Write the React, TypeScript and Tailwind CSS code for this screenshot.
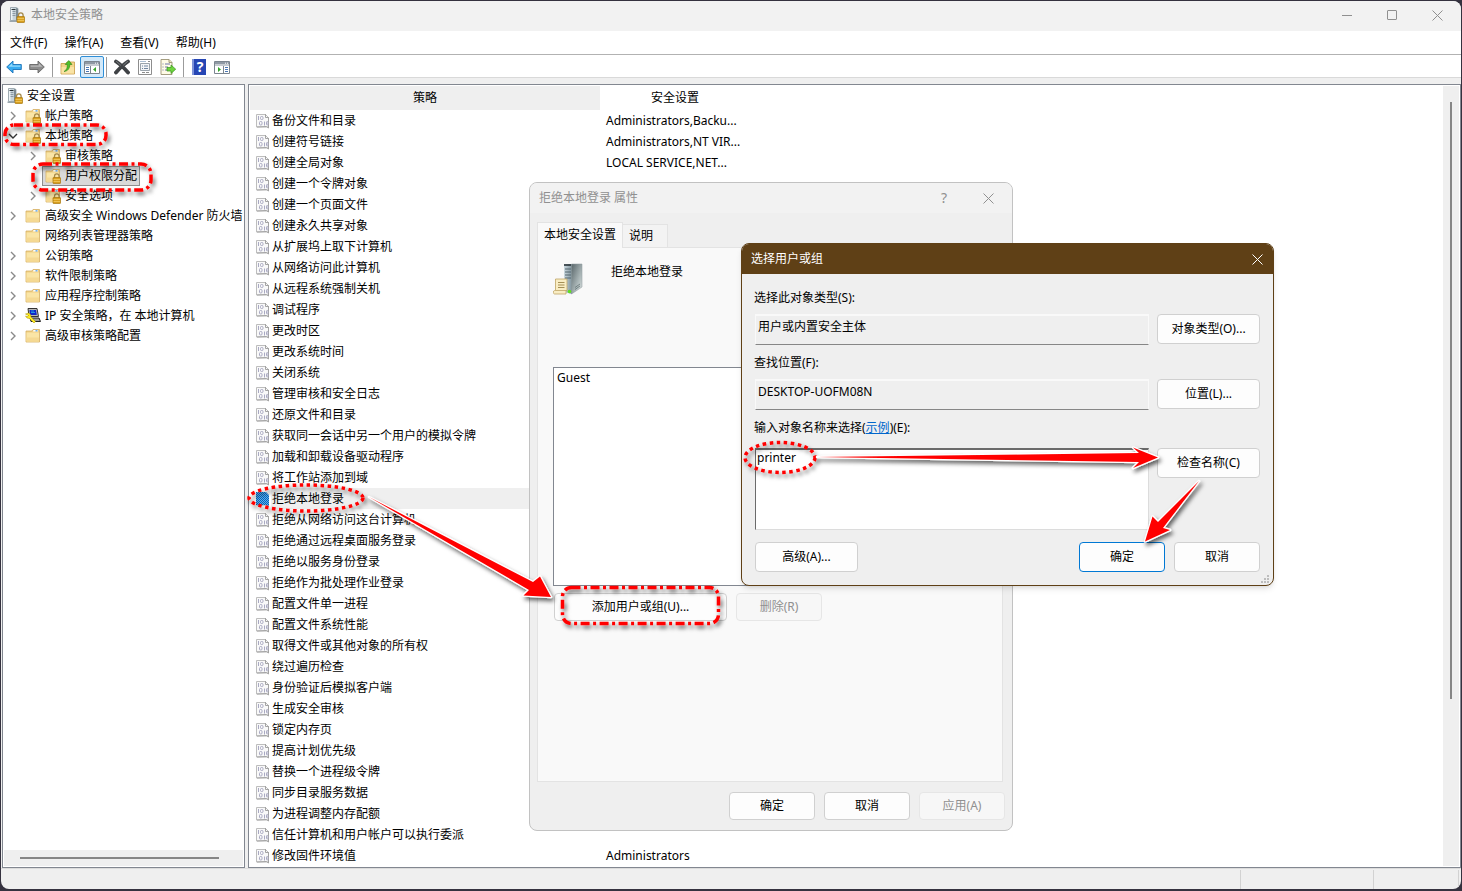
import React from 'react'

type IconKind = 'server' | 'folder' | 'folder-lock' | 'ip'

interface TreeItem {
  label: string
  icon: IconKind
  level: number
  arrow?: 'open' | 'closed'
  selected?: boolean
}

interface Policy {
  name: string
  setting?: string
}

const treeItems: TreeItem[] = [
  { label: '安全设置', icon: 'server', level: 0 },
  { label: '帐户策略', icon: 'folder-lock', level: 1, arrow: 'closed' },
  { label: '本地策略', icon: 'folder-lock', level: 1, arrow: 'open' },
  { label: '审核策略', icon: 'folder-lock', level: 2, arrow: 'closed' },
  { label: '用户权限分配', icon: 'folder-lock', level: 2, selected: true },
  { label: '安全选项', icon: 'folder-lock', level: 2, arrow: 'closed' },
  { label: '高级安全 Windows Defender 防火墙', icon: 'folder', level: 1, arrow: 'closed' },
  { label: '网络列表管理器策略', icon: 'folder', level: 1 },
  { label: '公钥策略', icon: 'folder', level: 1, arrow: 'closed' },
  { label: '软件限制策略', icon: 'folder', level: 1, arrow: 'closed' },
  { label: '应用程序控制策略', icon: 'folder', level: 1, arrow: 'closed' },
  { label: 'IP 安全策略，在 本地计算机', icon: 'ip', level: 1, arrow: 'closed' },
  { label: '高级审核策略配置', icon: 'folder', level: 1, arrow: 'closed' },
]

const policies: Policy[] = [
  { name: '备份文件和目录', setting: 'Administrators,Backu...' },
  { name: '创建符号链接', setting: 'Administrators,NT VIR...' },
  { name: '创建全局对象', setting: 'LOCAL SERVICE,NET...' },
  { name: '创建一个令牌对象' },
  { name: '创建一个页面文件' },
  { name: '创建永久共享对象' },
  { name: '从扩展坞上取下计算机' },
  { name: '从网络访问此计算机' },
  { name: '从远程系统强制关机' },
  { name: '调试程序' },
  { name: '更改时区' },
  { name: '更改系统时间' },
  { name: '关闭系统' },
  { name: '管理审核和安全日志' },
  { name: '还原文件和目录' },
  { name: '获取同一会话中另一个用户的模拟令牌' },
  { name: '加载和卸载设备驱动程序' },
  { name: '将工作站添加到域' },
  { name: '拒绝本地登录' },
  { name: '拒绝从网络访问这台计算机' },
  { name: '拒绝通过远程桌面服务登录' },
  { name: '拒绝以服务身份登录' },
  { name: '拒绝作为批处理作业登录' },
  { name: '配置文件单一进程' },
  { name: '配置文件系统性能' },
  { name: '取得文件或其他对象的所有权' },
  { name: '绕过遍历检查' },
  { name: '身份验证后模拟客户端' },
  { name: '生成安全审核' },
  { name: '锁定内存页' },
  { name: '提高计划优先级' },
  { name: '替换一个进程级令牌' },
  { name: '同步目录服务数据' },
  { name: '为进程调整内存配额' },
  { name: '信任计算机和用户帐户可以执行委派' },
  { name: '修改固件环境值', setting: 'Administrators' },
]

const menus = ['文件(F)', '操作(A)', '查看(V)', '帮助(H)']

// Small golden padlock, drawn in the lower right corner of a 16px icon
const Lock = () => (
  <g>
    <path d="M9.5 10V8.2a2.3 2.3 0 0 1 4.6 0V10" fill="none" stroke="#a58a4c" strokeWidth="1.3" />
    <rect x="8" y="9.5" width="7.5" height="6" rx="0.6" fill="#d99f1e" stroke="#a8770f" strokeWidth="0.7" />
    <path d="M8.5 11.5h6.5M8.5 13.5h6.5" stroke="#f3cb62" strokeWidth="0.8" />
  </g>
)

const ServerLockIcon = () => (
  <svg className="size-4 shrink-0" viewBox="0 0 16 16" aria-hidden="true">
    <path d="M1.500 0.500h5.500l2 1v12h-7.500z" fill="#c7d3da" stroke="#8f9ca4" strokeWidth="0.800" />
    <path d="M7 1l2 0.800v11.700H7z" fill="#7c8a92" />
    <path d="M2 1h1.500v12H2z" fill="#eef3f6" />
    <path d="M2.500 2.500h4" stroke="#2b3438" />
    <path d="M3.500 4.500h3M3.500 6.500h3M3.500 8.500h3" stroke="#7d8c95" strokeWidth="0.800" />
    <path d="M0.500 13.500h8v1.500h-8z" fill="#9aa6ad" />
    <Lock />
  </svg>
)

const FolderIcon = ({ locked = false }: { locked?: boolean }) => (
  <svg className="size-4 shrink-0" viewBox="0 0 16 16" aria-hidden="true">
    <path d="M1 3h6l1-1.500h6.500v12.500H1z" fill="#f0d084" stroke="#d6b064" strokeWidth="0.800" />
    <path d="M8.500 2h4.500v1.600H8z" fill="#fff" />
    <path d="M10.500 2.200h2v1.200h-2z" fill="#4a9be8" />
    <path d="M1.500 4.500h12.500v9H1.500z" fill="#fae5a6" />
    <path d="M1.500 9.500h12.500v4H1.500z" fill="#f5d993" />
    {locked && <Lock />}
  </svg>
)

const IpIcon = () => (
  <svg className="size-4 shrink-0" viewBox="0 0 16 16" aria-hidden="true">
    <path d="M3 0.500h9l1.500 8H4z" fill="#b8b8b8" stroke="#333" />
    <path d="M4.500 2h6.500l0.800 5H5z" fill="#1027c8" />
    <path d="M6 3h3M6 4.500h4" stroke="#28b4e8" strokeWidth="0.800" />
    <path d="M5 10h9l1.500 3.500H6z" fill="#9c9c9c" stroke="#222" />
    <path d="M0.500 6l3-1 2 1.500L6 9l4.500 4.500-1.500 1.500L4.500 10.500 2 10l-1.500-2 2 .5 1-1z" fill="#ffec1f" stroke="#a68f00" strokeWidth="0.500" />
  </svg>
)

const PolicyIcon = ({ selected = false }: { selected?: boolean }) => (
  <svg className="size-4 shrink-0" viewBox="0 0 16 16" aria-hidden="true">
    <path d="M1.500 1.500h9l3 3v9.500h-12z" fill="#f9f9f9" stroke="#bdbdbd" />
    <path d="M10.500 1v3.500h3.500M2 14l9.500-0.500 2 1.500V5" fill="none" stroke="#a3a3a3" />
    <g fill="none" stroke="#a9a9c2">
      <path d="M3.500 3v4M9.500 8.500v4M8 8.500v0" />
      <rect x="5.500" y="3.500" width="2.500" height="3" rx="1" />
      <rect x="4.500" y="8.500" width="2.500" height="3.500" rx="1" />
      <rect x="11.500" y="8.500" width="1.500" height="3.500" rx="0.700" />
    </g>
    {selected && (
      <>
        <defs>
          <pattern id="dither" width="2" height="2" patternUnits="userSpaceOnUse">
            <rect width="2" height="2" fill="#62ade8" />
            <rect width="1" height="1" fill="#0067c0" />
            <rect x="1" y="1" width="1" height="1" fill="#0067c0" />
          </pattern>
        </defs>
        <path d="M1 1h10l3 3v11l-3-1H1z" fill="url(#dither)" />
      </>
    )}
  </svg>
)

const TreeIcon = ({ kind }: { kind: IconKind }) => {
  if (kind === 'server') return <ServerLockIcon />
  if (kind === 'ip') return <IpIcon />
  return <FolderIcon locked={kind === 'folder-lock'} />
}

const BackIcon = () => (
  <svg className="size-4" viewBox="0 0 16 16" aria-hidden="true">
    <path d="M0.700 8L7 2v3.500h8.300v5H7V14z" fill="#36aaf0" stroke="#1b72b8" strokeWidth="0.900" strokeLinejoin="round" />
    <path d="M2.500 7.700L6.200 4.200v2.300h8.200v1.200z" fill="#93d9fb" />
  </svg>
)

const ForwardIcon = () => (
  <svg className="size-4" viewBox="0 0 16 16" aria-hidden="true">
    <path d="M15.300 8L9 2v3.500H0.700v5H9V14z" fill="#8d8d8d" stroke="#666" strokeWidth="0.900" strokeLinejoin="round" />
    <path d="M13.500 7.700L9.800 4.200v2.300H1.600v1.200z" fill="#bababa" />
  </svg>
)

const UpFolderIcon = () => (
  <svg className="size-4" viewBox="0 0 16 16" aria-hidden="true">
    <path d="M1 4.500h5l1-1.500h7.500v12H1z" fill="#f3d58a" stroke="#c69b45" strokeWidth="0.800" />
    <path d="M1.500 8h12.500v6.500H1.500z" fill="#f9e3a4" />
    <path d="M4 12.500C6.500 11 7.500 9 7.300 5.500H5.200L8.800 1.500 12 5.500H9.700C9.800 9.500 8 12 4 12.500z" fill="#4fc02c" stroke="#2d8415" strokeWidth="0.600" />
  </svg>
)

const PaneIcon = ({ side }: { side: 'left' | 'right' }) => (
  <svg className="size-4" viewBox="0 0 16 16" aria-hidden="true">
    <path d="M0.500 2.500h15v12h-15z" fill="#fff" stroke="#7b858f" />
    <path d="M1 3h14v2.500H1z" fill="#8f99a4" />
    <path d="M11 4.200h3" stroke="#fff" strokeDasharray="1 1" />
    <path d="M1 6.500h14" stroke="#c4cad0" />
    {side === 'left' ? (
      <>
        <path d="M2 8.500h3M2 10.500h3M2 12.500h3" stroke="#4b78b5" />
        <path d="M6.500 7v7" stroke="#7b858f" />
        <path d="M12 8v5L9 10.500z" fill="#35a52a" />
      </>
    ) : (
      <>
        <path d="M11 8.500h3M11 10.500h3M11 12.500h3" stroke="#4b78b5" />
        <path d="M9.500 7v7" stroke="#7b858f" />
        <path d="M4 8v5l3-2.500z" fill="#35a52a" />
      </>
    )}
  </svg>
)

const DeleteIcon = () => (
  <svg className="size-4" viewBox="0 0 16 16" aria-hidden="true">
    <path d="M2 2.500C6 5 11 10 14 13.500M14 2.500C10 5 5 10 2 13.500" fill="none" stroke="#3f4245" strokeWidth="3.800" strokeLinecap="round" />
    <path d="M2.500 2.500l4 3.500M13.500 2.500l-4 3.500" stroke="#7a7d80" strokeLinecap="round" />
  </svg>
)

const PropertiesIcon = () => (
  <svg className="size-4" viewBox="0 0 16 16" aria-hidden="true">
    <path d="M1.500 0.500h13v15h-13z" fill="#fff" stroke="#8d8d8d" />
    <path d="M3 2.500h6" stroke="#a9bdd1" />
    <path d="M11 2.500h2" stroke="#8d8d8d" />
    <path d="M3.500 4.500h9v7h-9z" fill="#f2f4f6" stroke="#9aa3ab" />
    <path d="M5 7h1M7 7h4M5 9.500h1M7 9.500h4" stroke="#7186a0" />
    <path d="M5 13.500h3M9 13.500h3" stroke="#8d8d8d" />
  </svg>
)

const ExportIcon = () => (
  <svg className="size-4" viewBox="0 0 16 16" aria-hidden="true">
    <path d="M1 0.500h8l3 3v12H1z" fill="#fffbe6" stroke="#9b9374" strokeWidth="0.900" />
    <path d="M9 0.500v3h3" fill="#efe6bb" stroke="#9b9374" strokeWidth="0.900" />
    <path d="M2.500 5h1M5 5h5M2.500 8h1M5 8h3M2.500 11h1M5 11h3" stroke="#6d74a8" />
    <path d="M7 8.500h4V6l4.700 4.200L11 14.500V12H7z" fill="#6fd43f" stroke="#33941a" strokeWidth="0.700" />
  </svg>
)

const HelpIcon = () => (
  <span className="flex h-4 w-3.5 items-center justify-center border-l-2 border-[#7d93d8] bg-[#2646b4] text-sm font-bold leading-none text-white">
    ?
  </span>
)

const CloseGlyph = ({ className }: { className: string }) => (
  <svg className={className} viewBox="0 0 11 11" fill="none" stroke="currentColor" aria-hidden="true">
    <path d="M0.500 0.500l10 10M10.500 0.500l-10 10" />
  </svg>
)

// 32px tower with a parchment scroll in front
const ServerScrollIcon = () => (
  <svg className="size-8 shrink-0" viewBox="0 0 32 32" aria-hidden="true">
    <defs>
      <linearGradient id="towerSide" x1="0" y1="0" x2="1" y2="1">
        <stop offset="0" stopColor="#59666a" />
        <stop offset="0.6" stopColor="#a9b5b6" />
        <stop offset="1" stopColor="#dfe5e4" />
      </linearGradient>
      <linearGradient id="towerFront" x1="0" y1="0" x2="1" y2="0">
        <stop offset="0" stopColor="#cbd9e0" />
        <stop offset="1" stopColor="#7f929b" />
      </linearGradient>
    </defs>
    <path d="M11 1h8v30l-8-2z" fill="url(#towerFront)" />
    <path d="M18.500 1h10.500v23l-10.500 7z" fill="url(#towerSide)" stroke="#8b9799" strokeWidth="0.500" />
    <path d="M11 2h7" stroke="#222b30" strokeWidth="1.500" />
    <path d="M12 6h6M12 9h6M12 12h6M12 15h6" stroke="#55676f" />
    <path d="M22 26.500l5-3.500M22 24.500l5-3.500" stroke="#56676a" strokeWidth="0.700" />
    <circle cx="16.500" cy="28.500" r="1.800" fill="#5fe01e" />
    <path d="M2.500 16h11.500v11.500h-1v3.500H1.500c-1.500 0-1.500-3.500 0-3.500h1z" fill="#f9edc3" stroke="#bfa566" strokeWidth="0.800" />
    <path d="M2.500 27.500h10.500" stroke="#bfa566" strokeWidth="0.800" />
    <path d="M5 19.500h6.500M5 22h6.500M5 24.500h6.500" stroke="#9b8548" strokeWidth="0.900" />
  </svg>
)

const buttonBase = 'rounded border text-center leading-4 whitespace-nowrap'
const pushButton = `${buttonBase} border-[#d0d0d0] bg-[#fdfdfd] text-black`
const disabledButton = `${buttonBase} border-[#e6e6e6] bg-[#f7f7f7] text-[#909090]`

const ToolbarSeparator = () => <span className="mx-1 h-5 w-px bg-[#9b9b9b]" />

const Tree = () => (
  <nav className="flex w-[243px] shrink-0 flex-col overflow-hidden border border-[#828790] bg-white">
    <ul className="flex-1 overflow-hidden pt-px pr-px">
      {treeItems.map((item) => (
        <li
          key={item.label}
          className={`flex h-5 items-center overflow-hidden whitespace-nowrap ${
            item.level === 0 ? 'pl-px' : item.level === 1 ? 'pl-1' : 'pl-6'
          }`}
        >
          {item.level > 0 && (
            <span className="flex w-[15px] shrink-0">
              {item.arrow && (
                <button type="button" aria-label={item.label} className="flex size-3 items-center justify-center">
                  <svg
                    className={`size-2.5 ${item.arrow === 'open' ? 'text-[#333]' : 'text-[#8a8a8a]'}`}
                    viewBox="0 0 10 10"
                    fill="none"
                    stroke="currentColor"
                    strokeWidth="1.400"
                  >
                    <path d={item.arrow === 'open' ? 'M1 3l4 4 4-4' : 'M3 1l4 4-4 4'} />
                  </svg>
                </button>
              )}
            </span>
          )}
          <span
            className={`flex h-5 items-center gap-1 border pl-0.5 pr-0.5 ${
              item.selected ? 'border-[#8f8f8f] bg-[#d9d9d9]' : 'border-transparent'
            }`}
          >
            <TreeIcon kind={item.icon} />
            <span>{item.label}</span>
          </span>
        </li>
      ))}
    </ul>
    <div className="mx-px mb-px flex h-4 items-center bg-[#efefef] pl-4 pr-6">
      <div className="h-0.5 w-full bg-[#868686]" />
    </div>
  </nav>
)

const PolicyTable = () => (
  <main className="flex min-w-0 flex-1 border border-[#828790] bg-white p-px">
    <div className="min-w-0 flex-1">
      <table className="w-[500px] table-fixed border-collapse text-left">
        <thead>
          <tr className="h-6">
            <th className="w-[350px] bg-[#efefef] p-0 text-center font-normal">策略</th>
            <th className="w-[150px] p-0 text-center font-normal">安全设置</th>
          </tr>
        </thead>
        <tbody>
          {policies.map((policy) => {
            const selected = policy.name === '拒绝本地登录'
            return (
              <tr key={policy.name} className="h-[21px]">
                <td className="p-0">
                  <div className="flex items-center pl-[5px]">
                    <PolicyIcon selected={selected} />
                    <span className={`h-[21px] flex-1 pl-px leading-[21px] ${selected ? 'bg-[#efefef]' : ''}`}>
                      {policy.name}
                    </span>
                  </div>
                </td>
                <td className="whitespace-nowrap py-0 pl-1.5 pr-0">{policy.setting}</td>
              </tr>
            )
          })}
        </tbody>
      </table>
    </div>
    <div className="flex w-4 justify-center bg-[#efefef] pt-4">
      <div className="h-[597px] w-0.5 bg-[#868686]" />
    </div>
  </main>
)

const PropertiesDialog = () => (
  <section className="absolute left-[529px] top-[182px] flex h-[649px] w-[484px] flex-col overflow-hidden rounded-lg border border-[#c2c2c2] bg-[#efefef]">
    <header className="flex h-[30px] shrink-0 items-center bg-[#f2f2f2] pl-[9px] pr-[18px] text-[#909090]">
      <h2 className="flex-1">拒绝本地登录 属性</h2>
      <button type="button" aria-label="帮助" className="mr-9 text-sm">
        ?
      </button>
      <button type="button" aria-label="关闭">
        <CloseGlyph className="size-[11px]" />
      </button>
    </header>
    <div className="flex flex-1 flex-col pl-[7px] pr-[9px] pt-[9px] pb-2.5">
      <div className="flex items-end" role="tablist">
        <button
          type="button"
          role="tab"
          aria-selected="true"
          className="z-10 -mb-px h-[26px] border border-b-0 border-[#e3e3e3] bg-[#f9f9f9] px-1.5 pb-0.5"
        >
          本地安全设置
        </button>
        <button type="button" role="tab" aria-selected="false" className="h-[23px] border border-b-0 border-l-0 border-[#e3e3e3] bg-[#f3f3f3] pl-1.5 pr-3.5">
          说明
        </button>
      </div>
      <div className="flex flex-1 flex-col border border-[#e3e3e3] bg-[#f9f9f9] px-[15px] pt-[15px]">
        <div className="flex h-[104px] gap-[26px]">
          <ServerScrollIcon />
          <p className="pt-px leading-4">拒绝本地登录</p>
        </div>
        <ul className="h-[219px] w-[412px] border border-[#828790] bg-white px-[3px] py-0.5 leading-4">
          <li>Guest</li>
        </ul>
        <div className="mt-[7px] flex gap-[9px] pl-px">
          <button type="button" className={`${pushButton} h-7 w-[173px]`}>
            添加用户或组(U)...
          </button>
          <button type="button" disabled className={`${disabledButton} h-7 w-[86px]`}>
            删除(R)
          </button>
        </div>
      </div>
      <footer className="-mr-0.5 mt-2.5 flex justify-end gap-[9px]">
        <button type="button" className={`${pushButton} h-7 w-[86px]`}>
          确定
        </button>
        <button type="button" className={`${pushButton} h-7 w-[86px]`}>
          取消
        </button>
        <button type="button" disabled className={`${disabledButton} h-7 w-[86px]`}>
          应用(A)
        </button>
      </footer>
    </div>
  </section>
)

const readonlyField =
  'h-[31px] min-w-0 flex-1 border border-t-2 border-[#f9f9f9] border-b-[#868686] bg-[#efefef] px-0.5 pb-2'

const SelectUsersDialog = () => (
  <section className="absolute left-[741px] top-[243px] flex h-[343px] w-[533px] flex-col overflow-hidden rounded-lg border border-[#5f4016] bg-[#efefef] shadow-md">
    <header className="flex h-[30px] shrink-0 items-center bg-[#5f4016] pl-[9px] pr-2.5 text-white">
      <h2 className="flex-1">选择用户或组</h2>
      <button type="button" aria-label="关闭">
        <CloseGlyph className="size-[11px]" />
      </button>
    </header>
    <form className="flex flex-1 flex-col gap-2.5 pt-4 pl-3 pr-[13px] leading-4">
      <div>
        <label htmlFor="objectType" className="block">
          选择此对象类型(S):
        </label>
        <div className="mt-2 flex items-start gap-2 pl-px">
          <input id="objectType" readOnly value="用户或内置安全主体" className={readonlyField} />
          <button type="button" className={`${pushButton} h-[30px] w-[103px]`}>
            对象类型(O)...
          </button>
        </div>
      </div>
      <div>
        <label htmlFor="location" className="block">
          查找位置(F):
        </label>
        <div className="mt-2 flex items-start gap-2 pl-px">
          <input id="location" readOnly value="DESKTOP-UOFM08N" className={readonlyField} />
          <button type="button" className={`${pushButton} h-[30px] w-[103px]`}>
            位置(L)...
          </button>
        </div>
      </div>
      <div>
        <label htmlFor="names">输入对象名称来选择(</label>
        <a href="#examples" className="text-[#0066cc] underline">
          示例
        </a>
        <label htmlFor="names">)(E):</label>
        <div className="mt-3 flex items-start gap-2 pl-px">
          <textarea
            id="names"
            defaultValue="printer"
            className="h-[82px] min-w-0 flex-1 resize-none border border-t-2 border-[#dcdcdc] border-l-[#6b6b6b] border-t-[#6b6b6b] bg-white px-px"
          />
          <button type="button" className={`${pushButton} h-[30px] w-[103px]`}>
            检查名称(C)
          </button>
        </div>
      </div>
      <div className="mt-0.5 flex gap-[9px] pl-px">
        <button type="button" className={`${pushButton} mr-auto h-[30px] w-[103px]`}>
          高级(A)...
        </button>
        <button type="button" className={`${buttonBase} h-[30px] w-[86px] border-[#0078d4] bg-[#fdfdfd]`}>
          确定
        </button>
        <button type="button" className={`${pushButton} h-[30px] w-[86px]`}>
          取消
        </button>
      </div>
    </form>
    <svg className="absolute bottom-0.5 right-1 size-2" viewBox="0 0 8 8" fill="#bdbdbd" aria-hidden="true">
      <path d="M6 0h2v2H6zM3 3h2v2H3zM6 3h2v2H6zM0 6h2v2H0zM3 6h2v2H3zM6 6h2v2H6z" />
    </svg>
  </section>
)

// Red call-outs pointing through the steps
const Annotations = () => (
  <svg
    className="pointer-events-none absolute left-0 top-0 h-[891px] w-[1462px]"
    viewBox="0 0 1462 891"
    fill="none"
    aria-hidden="true"
  >
    <defs>
      <filter id="drop" filterUnits="userSpaceOnUse" x="0" y="0" width="1462" height="891">
        <feDropShadow dx="2" dy="3" stdDeviation="2" floodColor="#000" floodOpacity="0.6" />
      </filter>
    </defs>
    <g stroke="#f00" strokeWidth="3.500" strokeDasharray="9 3.500 3 3.500" filter="url(#drop)">
      <rect x="5" y="125" width="101" height="19.500" rx="9" />
      <rect x="33" y="164" width="118" height="26" rx="10" />
      <rect x="562.500" y="587.500" width="156" height="36" rx="9" />
    </g>
    <g stroke="#f00" strokeWidth="3.500" strokeDasharray="3.500 3.500" filter="url(#drop)">
      <ellipse cx="306" cy="498" rx="57" ry="13" />
      <ellipse cx="780" cy="457.500" rx="35" ry="15" />
    </g>
    <g fill="#f00" stroke="#fff" strokeWidth="2.500" strokeLinejoin="round" paintOrder="stroke" filter="url(#drop)">
      <path d="M369 497L533 582 540 576.500 551 597 523.500 595.500 529 590z" />
      <path d="M817 457L1139 453 1133 447.500 1158 457.500 1133 468 1139 462z" />
      <path d="M1199 481L1158 522 1152.500 516.500 1145 541.500 1170 530 1163 528z" />
    </g>
  </svg>
)

export default function App() {
  return (
    <div className="relative flex min-h-screen overflow-hidden bg-[#35323f] pt-px pr-px pb-0.5 pl-px font-['Noto_Sans','Noto_Sans_CJK_SC',sans-serif] text-xs text-black">
      <div className="flex min-w-0 flex-1 flex-col overflow-hidden rounded-lg bg-[#efefef]">
        {/* Title bar */}
        <header className="flex h-[30px] items-center bg-[#f2f2f2] pb-0.5 pl-2 pr-[18px] text-[#909090]">
          <ServerLockIcon />
          <h1 className="ml-1.5 flex-1">本地安全策略</h1>
          <div className="flex items-center gap-[35px]">
            <button type="button" aria-label="最小化" className="h-px w-2.5 bg-[#909090]" />
            <button type="button" aria-label="最大化" className="size-2.5 rounded-[1px] border border-[#909090]" />
            <button type="button" aria-label="关闭">
              <CloseGlyph className="size-[11px]" />
            </button>
          </div>
        </header>

        {/* Menu bar */}
        <div className="flex h-6 items-center gap-[17px] border-b border-[#b2b2b2] bg-white pl-[9px]">
          {menus.map((menu) => (
            <button key={menu} type="button">
              {menu}
            </button>
          ))}
        </div>

        {/* Toolbar */}
        <div className="flex h-[23px] items-center border-b border-[#d9d9d9] bg-white pl-[5px] pt-px">
          <button type="button" aria-label="后退" className="mr-[7px]">
            <BackIcon />
          </button>
          <button type="button" aria-label="前进" className="mr-[3px]">
            <ForwardIcon />
          </button>
          <ToolbarSeparator />
          <button type="button" aria-label="向上" className="ml-[3px] mr-1">
            <UpFolderIcon />
          </button>
          <button
            type="button"
            aria-label="显示/隐藏控制台树"
            className="flex h-[22px] w-6 items-center justify-center rounded-xs border border-[#2f8fd8] bg-[#d3e9f9]"
          >
            <PaneIcon side="left" />
          </button>
          <span className="ml-0.5 mr-[7px] h-5 w-px bg-[#9b9b9b]" />
          <button type="button" aria-label="删除" className="mr-[7px]">
            <DeleteIcon />
          </button>
          <button type="button" aria-label="属性" className="mr-[7px]">
            <PropertiesIcon />
          </button>
          <button type="button" aria-label="导出列表" className="mr-[3px]">
            <ExportIcon />
          </button>
          <ToolbarSeparator />
          <button type="button" aria-label="帮助主题" className="mx-1">
            <HelpIcon />
          </button>
          <button type="button" aria-label="显示/隐藏操作窗格" className="ml-1">
            <PaneIcon side="right" />
          </button>
        </div>

        <div className="flex flex-1 gap-[3px] pl-px pt-1.5">
          <Tree />
          <PolicyTable />
        </div>

        {/* Status bar */}
        <footer className="flex h-[21px] justify-end border-t border-[#dcdcdc] pt-px pr-0.5">
          <div className="w-[133px] border-l border-[#d2d2d2]" />
          <div className="w-[86px] border-x border-[#d2d2d2]" />
        </footer>
      </div>

      <PropertiesDialog />
      <SelectUsersDialog />
      <Annotations />
    </div>
  )
}
